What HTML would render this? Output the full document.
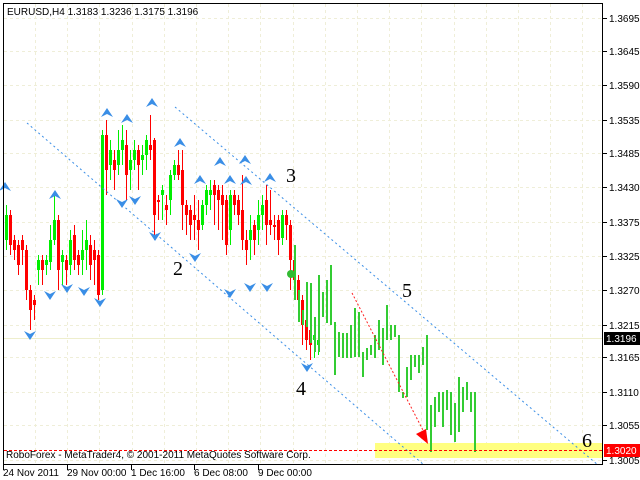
<!DOCTYPE html>
<html><head><meta charset="utf-8"><style>
html,body{margin:0;padding:0;background:#fff;width:640px;height:480px;overflow:hidden}
svg{display:block}
text{font-family:"Liberation Sans",sans-serif}
text.n{font-family:"Liberation Serif",serif}
</style></head><body>
<svg id="s" width="640" height="480" xmlns="http://www.w3.org/2000/svg">
<rect width="640" height="480" fill="#fff"/>
<g id="grid" stroke="#efeed8" stroke-dasharray="3,3" stroke-width="1"></g>
<rect x="375" y="443" width="228" height="15" fill="#ffff80"/>
<line x1="4" y1="338.5" x2="602" y2="338.5" stroke="#eeeecc" stroke-width="1"/>
<g id="candles"></g>
<g id="bars" stroke="#33cc33" stroke-width="2"></g>
<g stroke="#3a8ee6" stroke-width="1" stroke-dasharray="2,3">
<line x1="27" y1="123" x2="424" y2="465"/>
<line x1="175" y1="107" x2="598" y2="465"/>
</g>
<line x1="352" y1="293" x2="426" y2="436" stroke="#ff2020" stroke-width="1" stroke-dasharray="2,2"/>
<polygon points="428,444 416,434 426,429" fill="#ff0000"/>
<line x1="4" y1="450.5" x2="602" y2="450.5" stroke="#ff0000" stroke-dasharray="3,2"/>
<g id="arrows" fill="#3a8ee6"></g>
<circle cx="291" cy="274" r="4" fill="#33bb33"/>
<g font-size="20" fill="#000">
<text class="n" x="286" y="182">3</text><text class="n" x="173" y="275">2</text><text class="n" x="296" y="395">4</text><text class="n" x="402" y="297">5</text><text class="n" x="582" y="447">6</text>
</g>
<rect x="3.5" y="3.5" width="599" height="461" fill="none" stroke="#000"/>
<text x="7" y="15" font-size="10" fill="#000">EURUSD,H4  1.3183 1.3236 1.3175 1.3196</text>
<text x="6" y="458" font-size="10" fill="#000">RoboForex - MetaTrader4, © 2001-2011 MetaQuotes Software Corp.</text>
<g id="axis" font-size="10" fill="#000"></g>
<rect x="604" y="332" width="36" height="13" fill="#000"/>
<text x="606" y="342" font-size="10" fill="#fff">1.3196</text>
<rect x="604" y="444" width="36" height="13" fill="#ff0000"/>
<text x="606" y="454" font-size="10" fill="#fff">1.3020</text>
<g font-size="10" fill="#000">
<text x="3" y="476">24 Nov 2011</text><text x="67" y="476">29 Nov 00:00</text><text x="131" y="476">1 Dec 16:00</text><text x="194" y="476">6 Dec 08:00</text><text x="258" y="476">9 Dec 00:00</text>
</g>
<g stroke="#000"><line x1="3.5" y1="465" x2="3.5" y2="470"/><line x1="67.5" y1="465" x2="67.5" y2="470"/><line x1="131.5" y1="465" x2="131.5" y2="470"/><line x1="194.5" y1="465" x2="194.5" y2="470"/><line x1="258.5" y1="465" x2="258.5" y2="470"/></g>
</svg>
<script>
var NS="http://www.w3.org/2000/svg";
function el(p,t,a){var e=document.createElementNS(NS,t);for(var k in a)e.setAttribute(k,a[k]);document.getElementById(p).appendChild(e);return e;}
var ys=[18,51,85,120,153,187,222,256,290,325,357,392,425,460];
var lb=["1.3695","1.3645","1.3590","1.3535","1.3485","1.3430","1.3375","1.3325","1.3270","1.3215","1.3165","1.3110","1.3055","1.3005"];
for(var i=0;i<ys.length;i++){el("grid","line",{x1:4,x2:602,y1:ys[i]+.5,y2:ys[i]+.5});
el("axis","line",{x1:603,x2:607,y1:ys[i]+.5,y2:ys[i]+.5,stroke:"#000"});
var t=el("axis","text",{x:609,y:ys[i]+4});t.textContent=lb[i];}
for(var x=35;x<600;x+=32.2){el("grid","line",{x1:Math.round(x)+.5,x2:Math.round(x)+.5,y1:4,y2:464});}
var C=[[5,240,215,205,250],[9,215,245,210,255],[13,240,250,235,260],[17,245,265,240,275],[21,240,250,235,265],[25,250,290,245,300],[29,290,310,285,330],[33,300,305,295,320],[37,270,260,255,285],[41,260,270,255,285],[45,265,260,255,275],[49,262,240,225,270],[53,240,220,195,245],[57,220,270,215,290],[61,262,255,250,285],[65,260,270,255,285],[69,265,240,230,275],[73,235,260,225,270],[77,255,265,250,275],[81,260,250,230,275],[85,250,240,220,270],[89,245,265,235,280],[93,250,260,240,285],[97,255,295,250,300],[101,290,135,130,295],[105,135,170,120,195],[109,165,150,140,180],[113,160,170,150,190],[117,165,150,130,175],[121,150,140,125,165],[125,145,175,130,200],[129,170,160,150,190],[133,160,150,140,170],[137,150,165,145,190],[141,160,155,145,175],[145,155,140,135,170],[149,145,150,115,160],[153,140,215,138,240],[157,200,200,195,220],[161,195,190,185,220],[165,205,210,195,225],[169,200,175,170,215],[173,175,165,160,180],[177,165,175,150,180],[181,170,205,150,230],[185,205,215,200,235],[189,210,225,205,240],[193,215,220,195,240],[197,220,230,200,250],[201,225,205,200,230],[205,205,190,185,215],[209,195,190,180,210],[213,185,195,180,225],[217,190,200,185,230],[221,195,205,185,240],[225,200,245,195,255],[229,230,195,190,245],[233,195,205,190,215],[237,200,215,195,225],[241,210,240,175,250],[245,240,250,230,265],[249,240,230,215,260],[253,225,240,220,255],[257,230,215,200,245],[261,215,205,195,230],[265,200,225,185,245],[269,220,225,190,235],[273,225,225,215,240],[277,220,240,215,255],[281,238,215,210,245],[285,215,225,210,240],[289,225,260,220,290],[293,260,280,255,300],[297,280,300,275,320],[301,300,325,295,345],[305,320,340,315,350],[309,330,345,325,360],[313,340,335,325,358],[317,345,340,335,355]];
C.forEach(function(c){var up=c[2]<c[1];var col=up?"#00ee00":"#ff0000";
el("candles","line",{x1:c[0]+1.5,x2:c[0]+1.5,y1:c[3],y2:c[4],stroke:col});
var t=Math.min(c[1],c[2]),h=Math.max(2,Math.abs(c[1]-c[2]));
el("candles","rect",{x:c[0],y:t,width:3,height:h,fill:col});});
var B=[[295,245,300],[299,290,322],[303,310,325],[307,282,327],[311,283,343],[315,317,352],[319,275,352],[323,292,317],[327,280,323],[331,265,325],[335,322,375],[339,332,357],[343,333,358],[347,333,358],[351,325,358],[355,308,357],[359,312,357],[363,352,377],[367,348,360],[371,345,355],[375,335,358],[379,320,350],[383,328,365],[387,305,340],[391,325,340],[395,325,337],[399,335,392],[403,392,398],[407,367,397],[411,355,380],[415,355,367],[419,355,373],[423,347,365],[427,335,430],[431,405,452],[435,397,427],[439,392,412],[443,392,427],[447,390,410],[451,392,435],[455,403,442],[459,377,432],[463,387,412],[467,382,400],[471,392,412],[475,392,452]];
B.forEach(function(b){el("bars","line",{x1:b[0],x2:b[0],y1:b[1],y2:b[2]});});
var U=[[5,182],[55,190],[107,108],[127,114],[152,98],[180,138],[200,175],[220,157],[230,175],[245,155],[270,173],[246,176]];
U.forEach(function(a){el("arrows","polygon",{points:(a[0])+","+a[1]+" "+(a[0]+6)+","+(a[1]+9)+" "+a[0]+","+(a[1]+6)+" "+(a[0]-6)+","+(a[1]+9)});});
var D=[[30,340],[50,300],[67,293],[100,307],[122,208],[135,205],[155,241],[195,262],[230,298],[250,292],[267,292],[307,372],[84,296]];
D.forEach(function(a){el("arrows","polygon",{points:(a[0])+","+a[1]+" "+(a[0]+6)+","+(a[1]-9)+" "+a[0]+","+(a[1]-6)+" "+(a[0]-6)+","+(a[1]-9)});});
</script>
</body></html>
